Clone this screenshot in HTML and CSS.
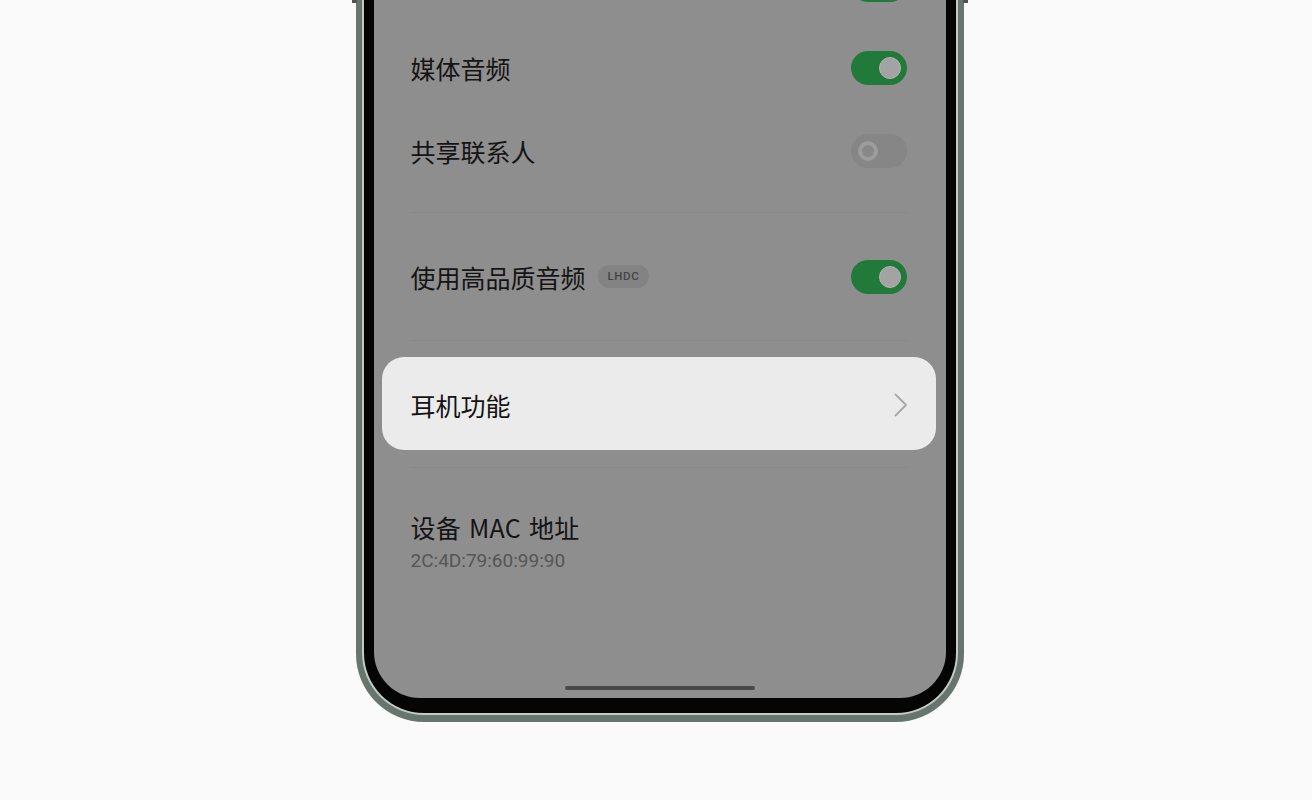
FILE: index.html
```html
<!DOCTYPE html>
<html lang="zh-CN">
<head>
  <meta charset="UTF-8">
  <title>蓝牙设备</title>
  <link rel="stylesheet" href="styles.css">
</head>
<body>

  <div class="stage">
    <div class="device">
      <span class="key key-left"></span>
      <span class="key key-right"></span>
      <div class="rim">
        <div class="bezel">
          <div class="screen">

            <div class="list">
              <!-- row scrolled mostly out of view, only its switch shows -->
              <div class="row">
                <span class="label"></span>
                <span class="switch on"><i></i></span>
              </div>
              <div class="row">
                <span class="label">媒体音频</span>
                <span class="switch on"><i></i></span>
              </div>
              <div class="row">
                <span class="label">共享联系人</span>
                <span class="switch off"><i></i></span>
              </div>

              <div class="divider first"></div>

              <div class="row tall">
                <span class="label">使用高品质音频 <span class="badge">LHDC</span></span>
                <span class="switch on"><i></i></span>
              </div>

              <div class="divider"></div>

              <div class="card">
                <span class="label">耳机功能</span>
                <svg class="chevron" width="14" height="24" viewBox="0 0 14 24">
                  <path d="M1.5 1.5 L12 12 L1.5 22.5" fill="none" stroke="#a8a8a8" stroke-width="1.8" stroke-linecap="round" stroke-linejoin="round"/>
                </svg>
              </div>

              <div class="divider after-card"></div>

              <div class="info">
                <div class="label mac">设备 MAC 地址</div>
                <div class="value">2C:4D:79:60:99:90</div>
              </div>
            </div>

            <div class="home-bar"></div>
          </div>
        </div>
      </div>
    </div>
  </div>

</body>
</html>
```

FILE: styles.css
```css
body {
  margin: 0;
  background: #fafafa;
  font-family: "Noto Sans CJK SC", "Noto Sans", sans-serif;
  overflow: hidden;
}

.stage {
  display: flex;
  justify-content: center;
  padding-left: 7px;
  height: 800px;
}

/* phone body, cut off at the top of the window */
.device {
  position: relative;
  width: 608px;
  height: 722px;
  box-sizing: border-box;
  background: #66766f;
  padding: 0 6px 7px;
  border-radius: 0 0 68px 68px;
}

.key {
  position: absolute;
  top: 0;
  width: 5px;
  height: 3px;
  background: #4c5753;
}
.key-left { left: -4px; }
.key-right { right: -4px; }

.rim {
  height: 100%;
  box-sizing: border-box;
  background: #c3cbc7;
  padding: 0 2px 2px;
  border-radius: 0 0 62px 62px;
}

.bezel {
  height: 100%;
  box-sizing: border-box;
  background: #050505;
  padding: 0 10px 15px;
  border-radius: 0 0 60px 60px;
}

.screen {
  height: 100%;
  background: #8e8e8e;
  border-radius: 0 0 46px 46px;
  overflow: hidden;
  display: flex;
  flex-direction: column;
}

.list {
  margin-top: -57px;
}

.row {
  height: 83px;
  display: flex;
  align-items: center;
  justify-content: space-between;
  padding: 0 39px 0 37px;
}
.row.tall { height: 127px; }

.label {
  font-size: 25px;
  color: #141414;
  display: flex;
  align-items: center;
}

.badge {
  margin-left: 12px;
  height: 23px;
  padding: 0 10px;
  border-radius: 12px;
  background: #838383;
  color: #444444;
  font-family: Roboto, "Liberation Sans", sans-serif;
  font-size: 11.5px;
  font-weight: 500;
  letter-spacing: 0.6px;
  line-height: 23px;
}

.switch {
  width: 56px;
  height: 34px;
  border-radius: 17px;
  display: flex;
  align-items: center;
  box-sizing: border-box;
  padding: 0 6px;
}
.switch i {
  display: block;
  box-sizing: border-box;
  width: 22px;
  height: 22px;
  border-radius: 50%;
}
.switch.on {
  background: #217a39;
  justify-content: flex-end;
}
.switch.on i {
  background: #a3a3a3;
  border: 1px solid #b4b4b4;
}
.switch.off {
  background: #868686;
  padding-left: 7px;
}
.switch.off i {
  width: 20px;
  height: 20px;
  background: #888888;
  border: 4px solid #9c9c9c;
}

.divider {
  height: 1px;
  background: #878787;
  margin: 0 39px 0 37px;
}
.divider.first { margin-top: 20px; }
.divider.after-card { margin-top: 17px; }

.card {
  margin: 16px 10px 0 8px;
  height: 93px;
  border-radius: 22px;
  background: #ebebeb;
  display: flex;
  align-items: center;
  justify-content: space-between;
  padding: 2px 28px 0 29px;
  box-sizing: border-box;
}

.info {
  padding: 43px 37px 0;
}
.info .label {
  line-height: 32px;
}
.info .mac {
  word-spacing: 2px;
  letter-spacing: 0.3px;
}
.info .value {
  margin-top: 6px;
  font-family: Roboto, "Liberation Sans", sans-serif;
  font-size: 19px;
  line-height: 24px;
  color: #555555;
}

.home-bar {
  margin: auto auto 8px;
  width: 190px;
  height: 4px;
  border-radius: 2px;
  background: #4a4a4a;
}
```
